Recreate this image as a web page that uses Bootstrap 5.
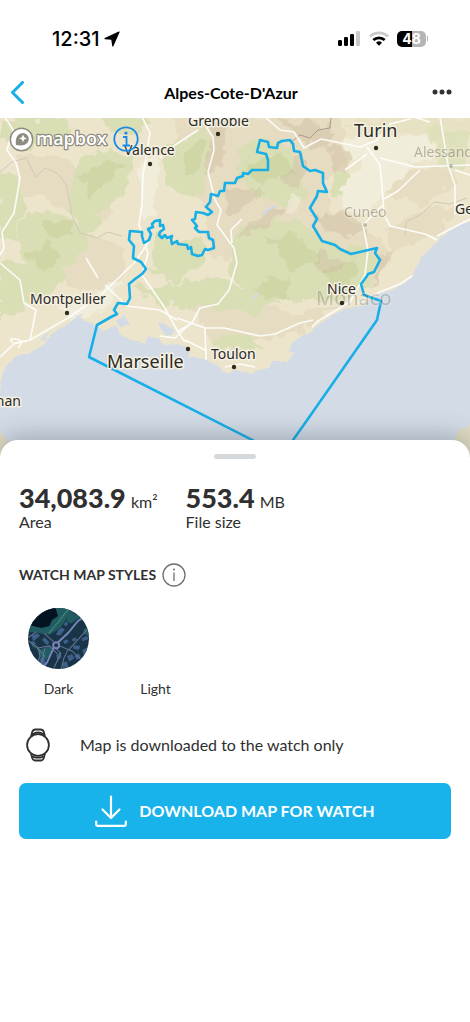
<!DOCTYPE html>
<html lang="en">
<head>
<meta charset="utf-8">
<meta name="viewport" content="width=device-width, initial-scale=1">
<title>Alpes-Cote-D'Azur</title>
<link href="https://cdn.jsdelivr.net/npm/bootstrap@5.3.0/dist/css/bootstrap.min.css" rel="stylesheet">
<style>
  body { font-family: Lato, "Open Sans", sans-serif; color: #303030; background: #fff; }
  button.plain { border: 0; background: none; padding: 0; color: inherit; line-height: 1; }
  svg { display: block; }
  .status { height: 68px; padding: 9px 42px 0 52px; font: 500 20px/24px Inter, sans-serif; color: #000; }
  .battery { width: 29px; height: 16px; border-radius: 5px; font: 700 14px/16px Inter, sans-serif; color: #fff; background: linear-gradient(90deg, #000 50%, #b5b5b5 50%); }
  .battery-tip { width: 1px; height: 5px; margin-left: 1px; background: #b5b5b5; }
  .topbar { height: 50px; padding: 0 18px 0 10px; }
  .topbar h1 { font-size: 16px; line-height: 24px; color: #000; }
  .topbar > div { flex: 1 1 0; }
  .map-area { height: 339px; }
  .map-area > svg { width: 100%; height: 100%; }
  .attribution { top: 5px; left: 9px; gap: 4px; }
  .map-labels { font-family: "Noto Sans", sans-serif; font-size: 14px; fill: #2b2a26; stroke: #f5f1e2; stroke-width: 3px; stroke-linejoin: round; paint-order: stroke; }
  .map-labels .city { font-size: 18px; }
  .map-labels .city-wide { font-size: 20px; }
  .sheet { margin-top: -17px; border-radius: 18px 18px 0 0; padding: 0 19px 24px; background: #fff; box-shadow: 0 -4px 24px rgba(40, 50, 60, .3); }
  .grip { width: 42px; height: 5px; margin: -2px auto 0; background: #d5d9dc; }
  .stats { padding-top: 28px; gap: 28px; }
  .stat-figure { line-height: 22px; }
  .stat-value { font-size: 27px; font-weight: 900; }
  .stat-unit { font-size: 16px; margin-left: 1px; }
  .stat-name { font-size: 16px; line-height: 18px; }
  .section-head { margin-top: 32px; gap: 6px; }
  .section-title { font-size: 14px; line-height: 24px; font-weight: 700; }
  .styles-list { margin: 21px -9px 0; }
  .style-option { width: 97px; font-size: 14px; }
  .swatch { width: 61px; height: 61px; margin: 0 auto 10px; }
  .style-option span { line-height: 20px; }
  .note { padding: 29px 0 21px 6px; gap: 29px; font-size: 16px; line-height: 24px; }
  .btn-download { --bs-btn-color: #fff; --bs-btn-bg: #18b3eb; --bs-btn-border-width: 0; --bs-btn-hover-color: #fff; --bs-btn-hover-bg: #129fd2; height: 56px; border-radius: 7px; gap: 12px; font-size: 16px; font-weight: 700; }
</style>
</head>
<body>
<header>
  <div class="status d-flex align-items-center justify-content-between">
    <div class="d-flex align-items-center gap-1">
      <span>12:31</span>
      <svg width="16" height="16" viewBox="0 0 16 16" stroke="#000" stroke-width="1.200" stroke-linejoin="round"><path d="M15 1 1 7.600l6.800.6 1 6.800Z"/></svg>
    </div>
    <div class="d-flex align-items-center">
      <svg width="23" height="15" viewBox="0 0 23 15"><rect x="0" y="9" width="4" height="6" rx="1.200"/><rect x="6" y="6" width="4" height="9" rx="1.200"/><rect x="12" y="3" width="4" height="12" rx="1.200"/><rect x="18" y="0" width="4" height="15" rx="1.200" fill="#cacaca"/></svg>
      <svg class="ms-2 me-2" width="20" height="15" viewBox="0 0 20 15" fill="none" stroke="#000" stroke-width="2.800"><path d="M1 5.500a13 13 0 0 1 18 0" stroke="#cacaca"/><path d="M4.300 9.100a8.300 8.300 0 0 1 11.400 0"/><path d="M7 11.700a4.500 4.500 0 0 1 6 0L10 14.800Z" fill="#000" stroke="none"/></svg>
      <div class="battery text-center">48</div><div class="battery-tip"></div>
    </div>
  </div>
  <nav class="topbar d-flex align-items-center">
    <div><button class="plain d-block" type="button" aria-label="Back"><svg width="16" height="24" viewBox="0 0 16 24" fill="none" stroke="#18aee8" stroke-width="3" stroke-linecap="round" stroke-linejoin="round"><path d="M12.500 1.500 2.500 11.500l10 10"/></svg></button></div>
    <h1 class="fw-bold m-0">Alpes-Cote-D'Azur</h1>
    <div class="d-flex justify-content-end"><button class="plain" type="button" aria-label="More"><svg width="20" height="10" viewBox="0 0 20 10" fill="#303030"><circle cx="3" cy="4" r="2.500"/><circle cx="10" cy="4" r="2.500"/><circle cx="17" cy="4" r="2.500"/></svg></button></div>
  </nav>
</header>
<main>
  <section class="map-area position-relative overflow-hidden">
    <svg viewBox="0 118 470 339" preserveAspectRatio="xMidYMid slice" role="img" aria-label="Map of the Alpes-Cote-D'Azur region">
      <defs>
        <filter id="rough" x="-5%" y="-5%" width="110%" height="110%"><feTurbulence type="fractalNoise" baseFrequency=".06" numOctaves="3" seed="4"/><feDisplacementMap in="SourceGraphic" scale="20" xChannelSelector="R" yChannelSelector="G"/></filter>
        <filter id="coastline" x="-5%" y="-5%" width="110%" height="110%"><feTurbulence type="fractalNoise" baseFrequency=".12" numOctaves="2" seed="8"/><feDisplacementMap in="SourceGraphic" scale="4" xChannelSelector="R" yChannelSelector="G"/></filter>
      </defs>
      <rect y="117" width="470" height="340" fill="#ece5cb"/>
      <g filter="url(#rough)">
        <g fill="#e6dcc1">
          <path d="M20 150 70 160 115 190 110 220 60 205 20 190Z"/>
          <path d="M165 115 340 115 345 165 320 180 335 215 380 235 390 260 370 290 345 300 300 290 260 250 215 260 200 200Z"/>
          <path d="M190 300 240 300 290 315 340 305 300 335 210 340Z"/>
          <path d="M75 230 125 250 120 280 75 290 50 270Z"/>
          <path d="M390 175 440 165 460 180 420 205 385 195Z"/>
          <path d="M385 230 430 205 460 210 430 240 395 250Z"/>
        </g>
        <g fill="#dadeb5">
          <path d="M0 117 60 117 75 135 30 150 0 140Z"/>
          <path d="M100 115 150 117 140 140 110 130Z"/>
          <path d="M0 175 18 180 25 205 15 240 0 235Z"/>
          <path d="M75 165 100 150 135 155 130 185 100 215 90 235 75 245 70 205Z"/>
          <path d="M25 215 55 210 80 225 90 245 75 262 50 275 30 265 15 240Z"/>
          <path d="M0 260 30 262 70 275 50 295 20 310 0 320Z"/>
          <path d="M165 145 205 128 212 150 205 190 180 195 165 185Z"/>
          <path d="M160 235 205 240 200 270 170 285 150 265Z"/>
          <path d="M235 150 255 138 290 145 300 175 310 195 285 205 255 195 240 175Z"/>
          <path d="M240 225 300 220 330 245 375 250 370 290 340 300 300 300 255 295 225 270Z"/>
          <path d="M130 287 220 280 260 290 280 305 250 315 215 305 165 305Z"/>
          <path d="M210 340 250 335 265 350 220 350Z"/>
          <path d="M335 125 390 117 470 117 470 140 420 135 360 130Z" opacity=".35"/>
          <path d="M430 130 470 130 470 165 445 170 435 150Z" opacity=".7"/>
          <path d="M335 170 360 180 350 200 330 195Z"/>
        </g>
        <g fill="#cbd29f" opacity=".65">
          <path d="M40 225 70 220 72 235 50 240Z"/>
          <path d="M28 255 50 242 60 260 45 272Z"/>
          <path d="M80 175 110 160 125 165 90 200Z"/>
          <path d="M185 150 205 140 203 165 185 180Z"/>
          <path d="M245 165 285 155 290 175 260 182Z"/>
          <path d="M265 240 300 235 320 260 290 270Z"/>
          <path d="M250 285 295 275 290 300 265 300Z"/>
          <path d="M320 270 355 260 358 280 335 290Z"/>
        </g>
        <g fill="#ccbb9f" opacity=".4">
          <path d="M210 117 228 117 222 160 208 175Z"/>
          <path d="M275 120 335 125 325 150 300 140Z"/>
          <path d="M225 195 260 185 268 192 230 215Z"/>
          <path d="M280 180 305 150 310 170 295 190Z"/>
          <path d="M325 150 350 145 345 175 330 165Z"/>
          <path d="M310 215 350 215 370 235 340 235Z"/>
          <path d="M320 250 350 262 330 275 310 265Z"/>
          <path d="M375 255 395 250 375 285Z"/>
          <path d="M245 220 290 205 270 225 240 238Z"/>
        </g>
        <g fill="#f0eddb">
          <path d="M340 185 370 155 410 165 385 195 360 215 345 210Z"/>
          <path d="M345 140 430 135 435 160 380 165 350 160Z"/>
          <path d="M140 165 160 160 155 215 140 220Z"/>
          <path d="M60 310 100 285 125 280 100 315 70 320Z"/>
          <path d="M285 195 305 200 300 215 285 210Z" opacity=".6"/>
        </g>
      </g>
      <g fill="none" stroke="#cfc9b8" stroke-width="1">
        <path d="M0 172 12 162 26 158 36 177 45 168 57 173 66 184 72 215 80 233 97 238 108 232 122 236"/>
        <path d="M467 198 450 204 434 202 420 215 406 222 405 236"/>
        <path d="M290 143 300 135 310 138 318 130 330 128 331 117" stroke="#a89d91"/>
      </g>
      <path d="M262 214q8-10 17-8l-10 4-5 6Z" fill="#cfd9e6"/>
      <g filter="url(#coastline)" fill="#d3dce6">
        <path d="M-5 400 0 393 2 376 7 364 17 356 33 351 45 343 55 331 67 324 78 317 93 324 103 331 116 325 121 335 133 341 145 344 147 336 160 339 165 345 180 344 190 349 188 357 205 359 218 366 227 374 235 369 252 374 254 371 269 368 272 361 288 361 294 352 287 351 298 337 311 333 318 325 331 316 345 309 362 306 377 295 399 288 412 277 420 259 437 241 450 230 464 223 490 219 490 480 0 480 -5 460Z"/>
        <path d="M40 340 50 331 45 341ZM75 317 84 313 80 318ZM117 320 124 315 129 323 121 328ZM158 322 172 327 175 331 166 337 160 329ZM251 299 259 291 256 298Z"/>
      </g>
      <path d="M0 432 8 441 14 460 0 460ZM455 437l5-9 6 1 4-6v35h-15Z" fill="#e0dbc3"/>
      <g fill="none" stroke="#fff" stroke-width="1.600" stroke-linejoin="round" opacity=".9">
        <path d="M5 117 13 130 7 150 16 163 20 178 14 213 2 232 4 248 0 255M0 263 20 280 24 303 36 310 30 340 14 344M0 357 15 343 30 340 68 318 100 296 135 262 150 240"/>
        <path d="M142 117 150 133 143 175 142 205 139 225 148 253 142 275 163 305 177 330 185 342"/>
        <path d="M86 258 98 278M105 285 127 306 160 310 177 320"/>
        <path d="M200 117 213 137 214 150 208 172 215 200 221 210 217 225 234 248 237 263 229 290 218 304 200 308 192 323 177 332M242 219 231 230 232 243"/>
        <path d="M160 158 175 145 198 130M265 117 280 130 294 132 304 148 321 139 360 147 377 140 390 124 410 119"/>
        <path d="M367 147 380 165 383 199 384 215 390 226 425 234 437 240M380 158 415 167 470 165M384 199 398 191 420 170M383 205 363 225 368 250 365 275 350 302 318 321 312 327"/>
        <path d="M345 170 367 154M437 236 470 219M440 117 448 165 455 185 455 215M414 117 430 122"/>
        <path d="M177 318 205 328 224 328 260 336 275 334 300 323 313 320M205 328 206 360M225 367 240 364 255 367"/>
        <path d="M160 336 175 338 192 322M185 340 207 351M358 303 380 292 400 284 412 276M455 170 470 175"/>
        <path d="M13 343q-6-5 3-4t2 9"/>
      </g>
      <path fill="none" stroke="#18afe6" stroke-width="2.600" stroke-linejoin="round" d="M260 140 257 152 266 154 268 160 268 170 252 170 248 174 243 173 243 176 237 178 235 183 225 183 224 191 220 191 218 196 211 194 210 202 206 207 212 212 208 215 203 213 196 212 195 219 192 220 197 226 195 228 199 232 208 232 209 238 213 240 214 248 208 250 205 249 202 255 198 256 192 254 191 247 188 249 187 245 178 244 177 241 172 244 171 239 172 236 167 238 165 235 162 238 159 235 160 232 164 229 163 225 160 226 160 220 155 221 152 224 153 227 148 229 151 234 149 240 144 243 142 236 142 232 130 231 129 240 134 246 133 258 141 262 146 269 142 274 135 279 129 284 130 298 127 304 118 303 114 310 117 314 111 317 104 321 97 325 89 357 272 450 286 450 310 416 377 320 381 301 364 295 361 284 367 276 368 274 374 272 380 260 375 253 377 248 351 254 340 249 335 245 322 241 313 226 317 219 310 208 317 196 318 191 327 192 323 183 323 173 315 170 310 171 303 166 300 152 294 151 293 144 290 140 282 141 278 143 277 148 269 147 268 142Z"/>
      <g class="map-labels">
        <text x="316" y="305" class="city-wide" opacity=".2">Monaco</text>
        <text x="414" y="157" opacity=".3">Alessand</text>
        <text x="344" y="217" opacity=".3">Cuneo</text>
        <text x="188" y="126">Grenoble</text>
        <text x="124" y="155">Valence</text>
        <text x="354" y="137" class="city">Turin</text>
        <text x="455" y="214">Ge</text>
        <text x="30" y="304">Montpellier</text>
        <text x="107" y="368" class="city">Marseille</text>
        <text x="211" y="359">Toulon</text>
        <text x="327" y="294">Nice</text>
        <text x="21" y="406" text-anchor="end">nan</text>
      </g>
      <g fill="#302a1b">
        <circle cx="218" cy="134" r="2.200"/><circle cx="150" cy="164" r="2.200"/><circle cx="376" cy="148" r="2.200"/><circle cx="67" cy="313" r="2.200"/><circle cx="188" cy="349" r="2.200"/><circle cx="234" cy="367" r="2.200"/><circle cx="342" cy="303" r="2.200"/>
        <g opacity=".25"><circle cx="451" cy="166" r="2"/><circle cx="365" cy="225" r="2"/></g>
      </g>
    </svg>
    <div class="attribution position-absolute d-flex align-items-center">
      <svg width="100" height="32" viewBox="0 0 100 32" role="img" aria-label="Mapbox">
        <circle cx="12.500" cy="16.500" r="11.200" fill="#fff" stroke="#8f8c7f" stroke-width="1.500"/>
        <path d="M7 22q-1-7 2.500-10.200a6 6 0 0 1 8.600 8.400Q14.500 23.500 7 22Z" fill="#8f8c7f"/><path d="m14 11.500 1.200 2.700 2.700 1.200-2.700 1.200L14 19.300l-1.200-2.700-2.700-1.200 2.700-1.200Z" fill="#fff"/>
        <text x="27" y="22" font-family="Open Sans, sans-serif" font-size="18" font-weight="600" fill="#fff" stroke="#8f8c7f" stroke-width="2.500" stroke-linejoin="round" paint-order="stroke">mapbox</text>
      </svg>
      <button class="plain" type="button" aria-label="Map information"><svg width="26" height="26" viewBox="0 0 26 26" fill="none" stroke="#168be8" stroke-width="1.800"><circle cx="13" cy="13" r="11.700"/><path d="M10 11h3.500v8.500M9.500 19.500h7.500"/><circle cx="13" cy="7" r="1.600" fill="#168be8" stroke="none"/></svg></button>
    </div>
  </section>
  <section class="sheet position-relative">
    <div class="pt-3"><div class="grip rounded-pill"></div></div>
    <div class="stats d-flex">
      <div><div class="stat-figure"><span class="stat-value">34,083.9</span> <span class="stat-unit">km²</span></div><div class="stat-name">Area</div></div>
      <div><div class="stat-figure"><span class="stat-value">553.4</span> <span class="stat-unit">MB</span></div><div class="stat-name">File size</div></div>
    </div>
    <div class="section-head d-flex align-items-center">
      <h2 class="section-title m-0">WATCH MAP STYLES</h2>
      <button class="plain" type="button" aria-label="About map styles"><svg width="24" height="24" viewBox="0 0 24 24" fill="none" stroke="#6f6f73" stroke-width="1.300"><circle cx="12" cy="12" r="11"/><path d="M12 9.500V18"/><circle cx="12" cy="6.500" r="1" fill="#6f6f73" stroke="none"/></svg></button>
    </div>
    <div class="styles-list d-flex">
      <button class="plain style-option" type="button">
        <svg class="swatch" viewBox="84 39 182 182">
          <defs><clipPath id="disc"><circle cx="175" cy="130" r="91"/></clipPath></defs>
          <g clip-path="url(#disc)">
            <path fill="#193347" d="M84 39h182v182H84z"/>
            <path fill="#225c63" d="M84 39h136l-38 58-34 22-64-10Z"/><path fill="#041322" d="M84 39h82l8 24-18 12-8 18-24 6-40-10Z"/>
            <path fill="#225c63" d="m208 48 32 18-28 20-14-8ZM250 100h18v24l-18-8ZM115 165l34-15 10 20-22 24-20-10Z"/>
            <path fill="none" stroke="#4b9b85" stroke-width="5" stroke-dasharray="3 3" d="M202 46 174 82l-28 32M96 150l20 12 20 24"/>
            <g fill="#3c6089"><path d="m174 104 12-7 8 6-14 18-12-2ZM190 86l9-7 5 8-8 8ZM94 122l18-8 8 8-20 16ZM126 134l8-8 14 16-8 8ZM188 138l12-6 6 8-12 7ZM214 132l12-6 4 8-11 6ZM220 150l20 2-4 12-18-4ZM244 130l16-8 4 10-18 6ZM200 182l16-6 6 14-15 9ZM168 180l12-8 4 14-12 10ZM222 182l12-8 8 10-12 10ZM118 192l14-10 6 24-12 8ZM186 202l14-4 4 16-16 4ZM246 164l16-8v16l-12 8ZM90 142l10-5 8 8-10 7Z"/></g>
            <g fill="none" stroke="#6b7595" stroke-width="3"><path d="m84 128 24-18M86 137l28 20 6 26-12 26M132 115l28 24M178 152l38 16 44 42M166 158l16 16-20 42M203 164l-12 25-8 32M205 164l60-66M114 158l34-6 24 24M134 160l-12 58"/></g>
            <g fill="none" stroke="#7685b7" stroke-width="6"><path d="m174 141 30-28 28-34 28-22M161 157l-20 44-16 20"/><circle cx="168" cy="150" r="9"/></g>
          </g>
        </svg>
        <span>Dark</span>
      </button>
      <button class="plain style-option" type="button"><div class="swatch"></div><span>Light</span></button>
    </div>
    <div class="note d-flex align-items-center">
      <svg width="26" height="34" viewBox="0 0 26 34" fill="none" stroke="#303030" stroke-width="1.800" stroke-linejoin="round"><circle cx="13" cy="17" r="10.900"/><path d="M6 8.500 7.200 4Q8 1.500 10.500 1.500h5Q18 1.500 18.800 4L20 8.500M7.500 7.500q1-3 5.500-3t5.500 3M6 25.500 7.200 30q.8 2.500 3.300 2.500h5q2.500 0 3.300-2.500L20 25.500M7.500 28q1 1.600 5.500 1.600T18.500 28"/></svg>
      <span>Map is downloaded to the watch only</span>
    </div>
    <button class="btn btn-download w-100 d-flex align-items-center justify-content-center" type="button">
      <svg width="32" height="32" viewBox="0 0 32 32" fill="none" stroke="#fff" stroke-width="2.200" stroke-linecap="round" stroke-linejoin="round"><path d="M16 1.500V23M7.500 14.500 16 23l8.500-8.500M1.200 26.500v3q0 1.300 1.300 1.300h27q1.300 0 1.300-1.300v-3"/></svg>
      <span>DOWNLOAD MAP FOR WATCH</span>
    </button>
  </section>
</main>
<script src="https://cdn.jsdelivr.net/npm/bootstrap@5.3.0/dist/js/bootstrap.bundle.min.js"></script>
</body>
</html>
